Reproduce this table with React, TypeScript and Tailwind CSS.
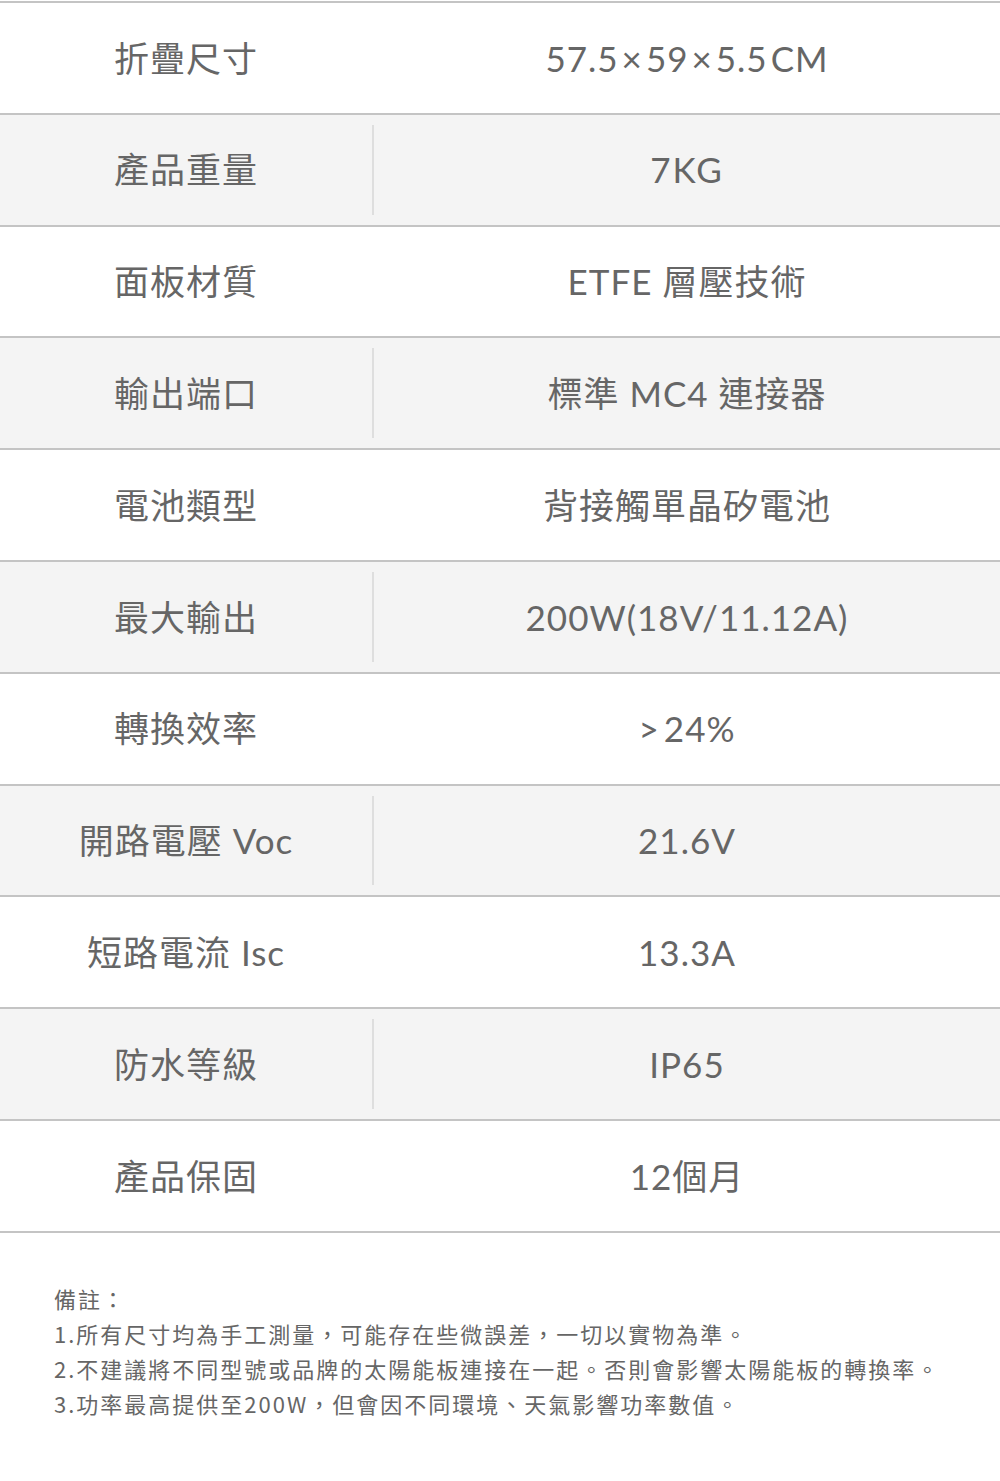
import React from "react";

const rows: [string, React.ReactNode][] = [
  [
    "折疊尺寸",
    <>
      57.5<span className="mx-[3px]">×</span>59<span className="mx-[3px]">×</span>5.5<span className="ml-[3px]">CM</span>
    </>,
  ],
  ["產品重量", <span className="tracking-[2px]">7KG</span>],
  ["面板材質", "ETFE 層壓技術"],
  ["輸出端口", "標準 MC4 連接器"],
  ["電池類型", "背接觸單晶矽電池"],
  ["最大輸出", "200W(18V/11.12A)"],
  [
    "轉換效率",
    <>
      <span className="mr-[4px]">&gt;</span>24%
    </>,
  ],
  ["開路電壓 Voc", "21.6V"],
  ["短路電流 Isc", "13.3A"],
  ["防水等級", "IP65"],
  ["產品保固", "12個月"],
];

export default function App() {
  return (
    <div
      className="w-[1000px] h-[1481px] bg-white text-[#666]"
      style={{ fontFamily: 'Lato, "Noto Sans CJK TC", sans-serif' }}
    >
      <div className="pt-px">
        <div className="border-t-2 border-[#c4c4c4]">
          {rows.map(([k, v], i) => {
            const gray = i % 2 === 1;
            return (
              <div
                key={k}
                className={`flex h-[111.8px] items-center border-b-2 border-[#c4c4c4] ${gray ? "bg-[#f4f4f4]" : "bg-white"}`}
              >
                <div className="w-[372px] text-center text-[35px] tracking-[1px]">{k}</div>
                <div className={`w-[2px] self-stretch my-[10px] ${gray ? "bg-[#dedede]" : "bg-transparent"}`} />
                <div className="flex-1 text-center text-[35px] tracking-[1px]">{v}</div>
              </div>
            );
          })}
        </div>
      </div>
      <div
        className="pl-[54px] pt-[48px] text-[22px] leading-[35px] tracking-[2px] text-[#666]"
        style={{ fontFamily: '"Noto Sans CJK TC", sans-serif' }}
      >
        <div>備註：</div>
        <div>1.所有尺寸均為手工測量，可能存在些微誤差，一切以實物為準。</div>
        <div>2.不建議將不同型號或品牌的太陽能板連接在一起。否則會影響太陽能板的轉換率。</div>
        <div>3.功率最高提供至200W，但會因不同環境、天氣影響功率數值。</div>
      </div>
    </div>
  );
}
